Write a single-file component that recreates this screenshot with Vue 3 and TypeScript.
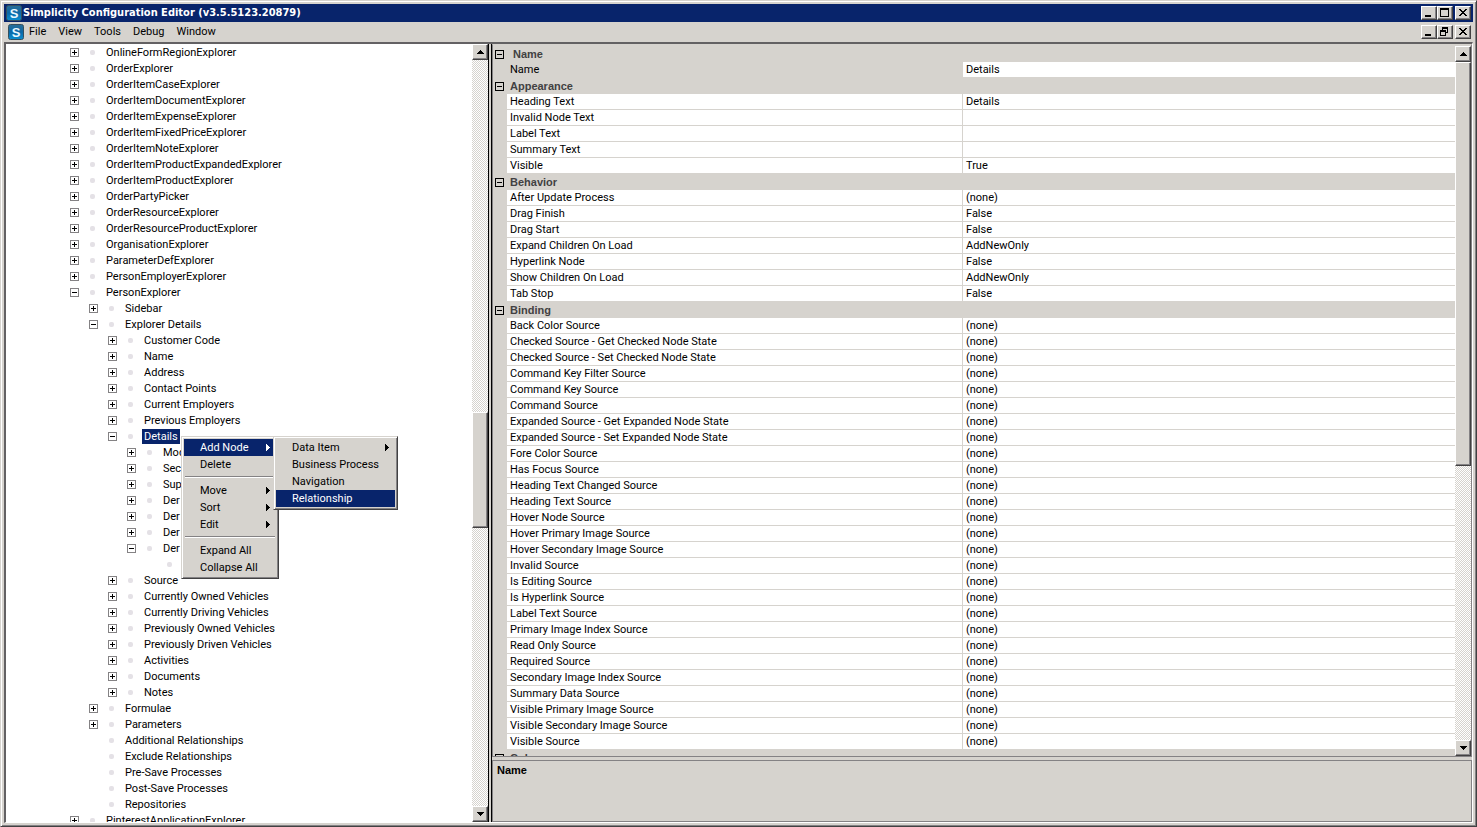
<script setup lang="ts">
interface TreeRow {
  label: string
  level: number
  state: 'plus' | 'minus' | 'leaf'
  selected?: boolean
}
interface PropertyRow {
  name: string
  value: string
}
interface Category {
  title: string
  indent?: boolean
  rows: PropertyRow[]
}
interface MenuEntry {
  label?: string
  arrow?: boolean
  active?: boolean
}

const rows = (level: number, state: TreeRow['state'], labels: string[]): TreeRow[] =>
  labels.map((label) => ({ label, level, state }))

const tree: TreeRow[] = [
  ...rows(0, 'plus', [
    'OnlineFormRegionExplorer', 'OrderExplorer', 'OrderItemCaseExplorer', 'OrderItemDocumentExplorer',
    'OrderItemExpenseExplorer', 'OrderItemFixedPriceExplorer', 'OrderItemNoteExplorer',
    'OrderItemProductExpandedExplorer', 'OrderItemProductExplorer', 'OrderPartyPicker',
    'OrderResourceExplorer', 'OrderResourceProductExplorer', 'OrganisationExplorer',
    'ParameterDefExplorer', 'PersonEmployerExplorer',
  ]),
  ...rows(0, 'minus', ['PersonExplorer']),
  ...rows(1, 'plus', ['Sidebar']),
  ...rows(1, 'minus', ['Explorer Details']),
  ...rows(2, 'plus', ['Customer Code', 'Name', 'Address', 'Contact Points', 'Current Employers', 'Previous Employers']),
  { label: 'Details', level: 2, state: 'minus', selected: true },
  ...rows(3, 'plus', ['Mod', 'Sec', 'Sup', 'Der', 'Der', 'Der']),
  ...rows(3, 'minus', ['Der']),
  ...rows(5, 'leaf', ['']),
  ...rows(2, 'plus', [
    'Source', 'Currently Owned Vehicles', 'Currently Driving Vehicles', 'Previously Owned Vehicles',
    'Previously Driven Vehicles', 'Activities', 'Documents', 'Notes',
  ]),
  ...rows(1, 'plus', ['Formulae', 'Parameters']),
  ...rows(1, 'leaf', [
    'Additional Relationships', 'Exclude Relationships', 'Pre-Save Processes', 'Post-Save Processes', 'Repositories',
  ]),
  ...rows(0, 'plus', ['PinterestApplicationExplorer']),
]

const none = (names: string[]): PropertyRow[] => names.map((name) => ({ name, value: '(none)' }))

const categories: Category[] = [
  { title: 'Name', indent: true, rows: [{ name: 'Name', value: 'Details' }] },
  {
    title: 'Appearance',
    rows: [
      { name: 'Heading Text', value: 'Details' },
      { name: 'Invalid Node Text', value: '' },
      { name: 'Label Text', value: '' },
      { name: 'Summary Text', value: '' },
      { name: 'Visible', value: 'True' },
    ],
  },
  {
    title: 'Behavior',
    rows: [
      { name: 'After Update Process', value: '(none)' },
      { name: 'Drag Finish', value: 'False' },
      { name: 'Drag Start', value: 'False' },
      { name: 'Expand Children On Load', value: 'AddNewOnly' },
      { name: 'Hyperlink Node', value: 'False' },
      { name: 'Show Children On Load', value: 'AddNewOnly' },
      { name: 'Tab Stop', value: 'False' },
    ],
  },
  {
    title: 'Binding',
    rows: none([
      'Back Color Source', 'Checked Source - Get Checked Node State', 'Checked Source - Set Checked Node State',
      'Command Key Filter Source', 'Command Key Source', 'Command Source',
      'Expanded Source - Get Expanded Node State', 'Expanded Source - Set Expanded Node State',
      'Fore Color Source', 'Has Focus Source', 'Heading Text Changed Source', 'Heading Text Source',
      'Hover Node Source', 'Hover Primary Image Source', 'Hover Secondary Image Source', 'Invalid Source',
      'Is Editing Source', 'Is Hyperlink Source', 'Label Text Source', 'Primary Image Index Source',
      'Read Only Source', 'Required Source', 'Secondary Image Index Source', 'Summary Data Source',
      'Visible Primary Image Source', 'Visible Secondary Image Source', 'Visible Source',
    ]),
  },
  { title: 'Color', rows: [] },
]

const menus = ['File', 'View', 'Tools', 'Debug', 'Window']

const contextMenu: MenuEntry[] = [
  { label: 'Add Node', arrow: true, active: true },
  { label: 'Delete' },
  {},
  { label: 'Move', arrow: true },
  { label: 'Sort', arrow: true },
  { label: 'Edit', arrow: true },
  {},
  { label: 'Expand All' },
  { label: 'Collapse All' },
]
const subMenu: MenuEntry[] = [
  { label: 'Data Item', arrow: true },
  { label: 'Business Process' },
  { label: 'Navigation' },
  { label: 'Relationship', active: true },
]
const popups = [
  { name: 'context', label: 'Node', entries: contextMenu },
  { name: 'sub', label: 'Add Node', entries: subMenu },
]
</script>

<template>
  <div class="window">
    <header class="titlebar">
      <svg class="logo" viewBox="0 0 16 16" aria-hidden="true">
        <defs>
          <linearGradient id="logo-fill" x1="0" y1="0" x2="0" y2="1">
            <stop offset="0" stop-color="#2a6d96" />
            <stop offset="0.5" stop-color="#0b69a8" />
            <stop offset="1" stop-color="#0a8fd0" />
          </linearGradient>
        </defs>
        <rect x="0.5" y="0.5" width="15" height="15" rx="2" fill="url(#logo-fill)" stroke="#35505e" />
        <text x="8" y="13" text-anchor="middle" font-size="13" fill="#e8f8ff">S</text>
      </svg>
      <h1>Simplicity Configuration Editor (v3.5.5123.20879)</h1>
      <div class="controls">
        <button class="raised ctl" aria-label="Minimize">
          <svg viewBox="0 0 12 10"><path d="M2 7h6v2H2z" /></svg>
        </button>
        <button class="raised ctl" aria-label="Maximize">
          <svg viewBox="0 0 12 10"><path fill-rule="evenodd" d="M1 0h9v9H1zM2 2v6h7V2z" /></svg>
        </button>
        <button class="raised ctl close" aria-label="Close">
          <svg viewBox="0 0 12 10"><path d="M2 1h2v1h1v1h2V2h1V1h2v1H9v1H8v1H7v1h1v1h1v1h1v1H8V7H7V6H5v1H4v1H2V7h1V6h1V5h1V4H4V3H3V2H2z" /></svg>
        </button>
      </div>
    </header>

    <nav class="menubar" aria-label="Main">
      <svg class="logo" viewBox="0 0 16 16" aria-hidden="true">
        <rect x="0.5" y="0.5" width="15" height="15" rx="2" fill="url(#logo-fill)" stroke="#35505e" />
        <text x="8" y="13" text-anchor="middle" font-size="13" fill="#e8f8ff">S</text>
      </svg>
      <button v-for="m in menus" :key="m" class="menu">{{ m }}</button>
      <div class="controls">
        <button class="raised ctl" aria-label="Minimize document">
          <svg viewBox="0 0 12 10"><path d="M2 7h6v2H2z" /></svg>
        </button>
        <button class="raised ctl" aria-label="Restore document">
          <svg viewBox="0 0 12 10"><path fill-rule="evenodd" d="M3 0h6v6H7V5h1V2H4v1H3zM1 3h6v6H1zM2 5v3h4V5z" /></svg>
        </button>
        <button class="raised ctl close" aria-label="Close document">
          <svg viewBox="0 0 12 10"><path d="M2 1h2v1h1v1h2V2h1V1h2v1H9v1H8v1H7v1h1v1h1v1h1v1H8V7H7V6H5v1H4v1H2V7h1V6h1V5h1V4H4V3H3V2H2z" /></svg>
        </button>
      </div>
    </nav>

    <main class="workspace">
      <section class="tree-pane" aria-label="Explorers">
        <ul class="tree">
          <li v-for="(r, i) in tree" :key="i" :class="['node', 'level-' + r.level]">
            <button v-if="r.state !== 'leaf'" class="toggle" :aria-label="r.state === 'plus' ? 'Expand' : 'Collapse'">
              <svg viewBox="0 0 9 9">
                <path class="frame" fill-rule="evenodd" d="M0 0h9v9H0zM1 1v7h7V1z" />
                <path d="M2 4h5v1H2z" />
                <path v-if="r.state === 'plus'" d="M4 2h1v5H4z" />
              </svg>
            </button>
            <span v-else class="toggle"></span>
            <span class="dot"></span>
            <span :class="['label', { selected: r.selected }]">{{ r.label }}</span>
          </li>
        </ul>
        <div class="scrollbar tree-scroll">
          <button class="raised arrow" aria-label="Scroll up"><svg viewBox="0 0 7 4"><path d="M3 0h1v1h1v1h1v1h1v1H0V3h1V2h1V1h1z" /></svg></button>
          <div class="before"></div>
          <div class="raised thumb"></div>
          <div class="after"></div>
          <button class="raised arrow" aria-label="Scroll down"><svg viewBox="0 0 7 4"><path d="M0 0h7v1H6v1H5v1H4v1H3V3H2V2H1V1H0z" /></svg></button>
        </div>
      </section>

      <div class="splitter"></div>

      <section class="detail-pane" aria-label="Properties">
        <div class="grid-box">
          <div class="grid-clip">
            <table class="grid">
              <colgroup><col class="c-gutter" /><col class="c-name" /><col /></colgroup>
              <tbody v-for="c in categories" :key="c.title">
                <tr class="category">
                  <td class="gutter">
                    <button class="toggle" aria-label="Collapse">
                      <svg viewBox="0 0 9 9"><path fill-rule="evenodd" d="M0 0h9v9H0zM1 1v7h7V1z" /><path d="M2 4h5v1H2z" /></svg>
                    </button>
                  </td>
                  <th colspan="2" :class="{ indent: c.indent }">{{ c.title }}</th>
                </tr>
                <tr v-for="p in c.rows" :key="p.name" :class="{ current: c.indent }">
                  <td class="gutter"></td>
                  <td class="name">{{ p.name }}</td>
                  <td class="value">{{ p.value }}</td>
                </tr>
              </tbody>
            </table>
          </div>
          <div class="scrollbar grid-scroll">
            <button class="raised arrow" aria-label="Scroll up"><svg viewBox="0 0 7 4"><path d="M3 0h1v1h1v1h1v1h1v1H0V3h1V2h1V1h1z" /></svg></button>
            <div class="raised thumb"></div>
            <div class="after"></div>
            <button class="raised arrow" aria-label="Scroll down"><svg viewBox="0 0 7 4"><path d="M0 0h7v1H6v1H5v1H4v1H3V3H2V2H1V1H0z" /></svg></button>
          </div>
        </div>
        <div class="description"><strong>Name</strong></div>
      </section>
    </main>

    <div v-for="p in popups" :key="p.name" :class="['popup', p.name]" role="menu" :aria-label="p.label">
      <template v-for="(e, i) in p.entries" :key="i">
        <button v-if="e.label" role="menuitem" :class="['item', { active: e.active }]">
          <span>{{ e.label }}</span>
          <svg v-if="e.arrow" viewBox="0 0 4 7"><path d="M0 0h1v1h1v1h1v1h1v1H3v1H2v1H1v1H0z" /></svg>
        </button>
        <div v-else class="separator" role="separator"></div>
      </template>
    </div>
  </div>
</template>

<style>
body {
  margin: 0;
  background: #d6d3ce;
}
</style>

<style scoped>
* {
  box-sizing: border-box;
}
.window {
  position: relative;
  display: flex;
  flex-direction: column;
  height: 100vh;
  padding: 2px 1px 1px 2px;
  overflow: hidden;
  background: #d6d3ce;
  border: 1px solid #d6d3ce;
  border-right-color: #424142;
  border-bottom-color: #424142;
  box-shadow: inset 1px 1px 0 #fff, inset -1px -1px 0 #848284;
  font-family: Roboto, "Liberation Sans", Arial, sans-serif;
  font-size: 11px;
  line-height: 16px;
  color: #000;
  white-space: nowrap;
}
button {
  margin: 0;
  padding: 0;
  border: 0;
  background: none;
  color: inherit;
  font: inherit;
}
svg {
  display: block;
  fill: currentColor;
  shape-rendering: crispEdges;
}
.titlebar {
  display: flex;
  align-items: center;
  flex: none;
  height: 18px;
  margin: 1px 2px 0 1px;
  padding: 0 2px;
  background: #08246b;
  color: #fff;
}
.logo {
  width: 16px;
  height: 16px;
  flex: none;
  shape-rendering: auto;
  font-family: "Liberation Sans", Arial, sans-serif;
  font-weight: bold;
}
h1 {
  margin: 0 0 0 1px;
  font: bold 11px/18px "DejaVu Sans Condensed", "DejaVu Sans", sans-serif;
}
.controls {
  display: flex;
  margin-left: auto;
  color: #000;
}
.raised {
  background: #d6d3ce;
  border: 1px solid;
  border-color: #fff #424142 #424142 #fff;
  box-shadow: inset -1px -1px 0 #848284;
}
.ctl {
  width: 16px;
  height: 14px;
  padding: 1px;
}
.ctl svg {
  width: 12px;
  height: 10px;
}
.close {
  margin-left: 2px;
}
.menubar {
  display: flex;
  align-items: center;
  flex: none;
  height: 20px;
  margin: 0 2px 0 1px;
  padding: 0 2px 0 4px;
}
.menu {
  padding: 0 6px;
  line-height: 18px;
}
.menubar .logo {
  margin-right: -1px;
}
.workspace {
  display: flex;
  flex: 1;
  min-height: 0;
  margin: 0 2px 2px 1px;
  border: solid;
  border-width: 2px 1px 1px 2px;
  border-color: #636163 #fff #fff #636163;
}
.tree-pane {
  display: flex;
  flex: none;
  width: 482px;
  overflow: hidden;
  background: #fff;
}
.tree {
  flex: 1;
  min-width: 0;
  margin: 0;
  padding: 0;
  overflow: hidden;
  list-style: none;
}
.node {
  display: flex;
  align-items: center;
  height: 16px;
  padding-left: 64px;
}
.level-1 { padding-left: 83px; }
.level-2 { padding-left: 102px; }
.level-3 { padding-left: 121px; }
.level-5 { padding-left: 159px; }
.toggle {
  display: block;
  width: 9px;
  height: 9px;
  flex: none;
}
.toggle svg {
  width: 9px;
  height: 9px;
}
.frame {
  fill: #848284;
}
.dot {
  width: 5px;
  height: 5px;
  flex: none;
  margin: 0 9px 0 11px;
  border-radius: 2px;
  background: #e4e1e6;
}
.level-5 .dot {
  margin-left: -7px;
}
.label {
  padding: 0 2px;
  line-height: 15px;
}
.selected {
  background: #08246b;
  color: #fff;
}
.scrollbar {
  display: flex;
  flex-direction: column;
  flex: none;
  width: 16px;
  background: repeating-conic-gradient(#fff 0 25%, #d6d3ce 0 50%) 0 0 / 2px 2px;
}
.arrow {
  display: flex;
  align-items: center;
  justify-content: center;
  flex: none;
  height: 16px;
}
.arrow svg {
  width: 7px;
  height: 4px;
}
.tree-scroll .before { flex: 352; }
.tree-scroll .thumb { flex: 115; }
.tree-scroll .after { flex: 278; }
.grid-scroll .thumb { flex: 403; }
.grid-scroll .after { flex: 275; }
.splitter {
  flex: none;
  width: 4px;
  background: #d6d3ce;
  border: solid #000;
  border-width: 0 1px;
}
.detail-pane {
  display: flex;
  flex: 1;
  flex-direction: column;
  gap: 3px;
  min-width: 0;
}
.grid-box {
  display: flex;
  flex: 1;
  min-height: 0;
  padding-top: 1px;
  border: 1px solid #848284;
  border-top-color: #d6d3ce;
}
.grid-clip {
  flex: 1;
  min-width: 0;
  overflow: hidden;
}
.grid {
  width: 100%;
  table-layout: fixed;
  border-collapse: separate;
  border-spacing: 0;
}
.c-gutter { width: 14px; }
.c-name { width: 47.4%; }
.grid tr {
  height: 16px;
}
.grid td,
.grid th {
  height: 16px;
  padding: 0 3px;
  line-height: 15px;
  text-align: left;
  overflow: hidden;
}
.grid .gutter {
  padding: 0 2px;
}
.grid th {
  color: #424142;
  font-family: "Liberation Sans", Arial, sans-serif;
  font-size: 11px;
}
.grid th.indent {
  padding-left: 6px;
}
.grid .name,
.grid .value {
  background: #fff;
  border-bottom: 1px solid #d6d3ce;
}
.grid .name {
  border-right: 1px solid #d6d3ce;
}
.grid .current .name {
  background: #d6d3ce;
}
.description {
  flex: none;
  height: 62px;
  padding: 1px 4px;
  border: 1px solid #848284;
  font-family: "Liberation Sans", Arial, sans-serif;
}
.popup {
  position: absolute;
  display: flex;
  flex-direction: column;
  padding: 2px;
  background: #d6d3ce;
  border: 1px solid;
  border-color: #d6d3ce #424142 #424142 #d6d3ce;
  box-shadow: inset 1px 1px 0 #fff, inset -1px -1px 0 #848284;
  line-height: 17px;
}
.context {
  top: 435px;
  left: 180px;
  width: 98px;
}
.sub {
  top: 435px;
  left: 272px;
  width: 125px;
}
.item {
  display: flex;
  align-items: center;
  justify-content: space-between;
  height: 17px;
  padding: 0 6px 0 16px;
}
.item svg {
  width: 4px;
  height: 7px;
}
.active {
  background: #08246b;
  color: #fff;
}
.separator {
  height: 2px;
  margin: 3px 1px 4px;
  border-top: 1px solid #848284;
  border-bottom: 1px solid #fff;
}
</style>
